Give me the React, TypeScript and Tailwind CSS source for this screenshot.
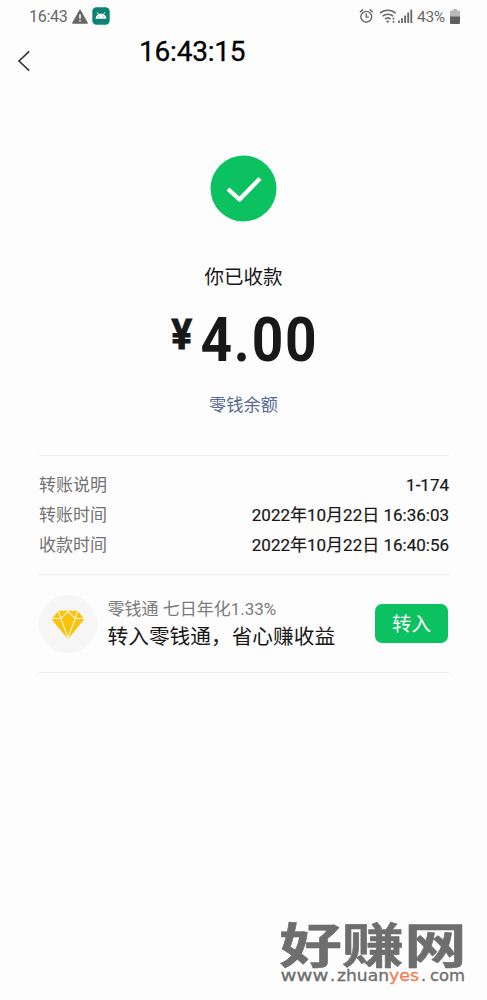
const details = [
  { label: "转账说明", value: "1-174" },
  { label: "转账时间", value: "2022年10月22日 16:36:03" },
  { label: "收款时间", value: "2022年10月22日 16:40:56" },
];

function StatusBar() {
  return (
    <div className="flex h-8 items-center justify-between pl-[29px] pr-[27px] text-[#686868]">
      <div className="flex items-center">
        <span className="w-[43px] pt-px text-[16px] leading-8 tracking-[-0.3px]">16:43</span>
        <svg width="16" height="15" viewBox="0 0 16 15">
          <path d="M8 0.8 15.5 14.2H.5Z" fill="#686868" stroke="#686868" strokeLinejoin="round" />
          <path d="M8 5.2v4.6M8 11v1.6" stroke="#fdfdfd" strokeWidth="1.5" />
        </svg>
        <svg className="ml-[4px]" width="18" height="18" viewBox="0 0 18 18">
          <rect x="0.3" y="0.3" width="17.4" height="17.4" rx="4.2" fill="#0c8471" />
          <path d="M3.6 11.8c0-3 2.4-5 5.4-5s5.4 2 5.4 5Z" fill="#fff" />
          <path d="m5.2 5.3 1.3 2.2M12.8 5.3l-1.3 2.2" stroke="#fff" strokeWidth="0.9" />
          <circle cx="6.8" cy="9.8" r="0.5" fill="#0c8471" />
          <circle cx="11.2" cy="9.8" r="0.5" fill="#0c8471" />
        </svg>
      </div>
      <div className="flex items-center">
        <svg width="15" height="16" viewBox="0 0 15 16" fill="none" stroke="#686868" strokeWidth="1.4">
          <circle cx="7.3" cy="8.8" r="5.4" />
          <path d="M7.3 5.6v3.5h2.6M.8 4.2 4 1.4M13.8 4.2 10.6 1.4" />
        </svg>
        <svg className="ml-[5px]" width="18" height="16" viewBox="0 0 18 16" fill="none" stroke="#686868" strokeWidth="1.5">
          <path d="M1 5.2c4.3-4.1 11.4-4.1 15.7 0M3.5 8.3c3-2.8 7.7-2.8 10.7 0M6 11.2c1.6-1.5 4-1.5 5.6 0" />
          <circle cx="8.7" cy="13.6" r="1.2" fill="#686868" stroke="none" />
          <path d="M14.5 9.5v2M14.5 12.800v2" />
        </svg>
        <svg className="ml-px" width="15" height="14" viewBox="0 0 15 14" stroke="#686868" strokeWidth="1.8">
          <path d="M1 11.5V14M4 9.2V14M7.1 6.5V14M10.2 3.5V14M13.3 .5V14" />
        </svg>
        <span className="ml-[4px] w-[30px] whitespace-nowrap pt-px text-[15.5px] leading-8 tracking-[-0.3px]">43%</span>
        <svg className="ml-[3px]" width="10" height="15" viewBox="0 0 10 15">
          <path d="M3 0h4v1.500h2a1 1 0 0 1 1 1V8H0V2.500a1 1 0 0 1 1-1h2Z" fill="#b9b9b9" />
          <path d="M0 7.500h10V14a1 1 0 0 1-1 1H1a1 1 0 0 1-1-1Z" fill="#606060" />
        </svg>
      </div>
    </div>
  );
}

function NavBar() {
  return (
    <div className="flex h-[60px] pl-[17px]">
      <svg className="mt-[18px]" width="14" height="22" viewBox="0 0 14 22" fill="none" stroke="#333" strokeWidth="1.6">
        <path d="M12.2 1.3 2 11l10.2 9.7" />
      </svg>
      <div className="ml-[108px] mt-[4px] text-[28px] leading-8 tracking-[-0.2px] text-black [-webkit-text-stroke:0.3px_black]">16:43:15</div>
    </div>
  );
}

function Diamond() {
  return (
    <div className="flex size-[58px] shrink-0 items-center justify-center rounded-full bg-[#f6f6f6]">
      <svg className="mt-[3px]" width="34" height="30" viewBox="0 0 34 30">
        <path d="M7.5 .8h19l6.800 8.400L17 29.200.7 9.200Z" fill="#fac20a" />
        <path d="M.7 8.500h9.100L17 1.500l7.200 7h9.100M9.800 8.500 17 28l7.200-19.500M7.300.8l2.500 7.700M26.700.8l-2.500 7.700" fill="none" stroke="#fff6dc" strokeWidth="1.1" />
      </svg>
    </div>
  );
}

function SiteMark() {
  return (
    <svg className="absolute left-[278px] top-[890px]" width="192" height="110" viewBox="0 0 192 110">
      <text
        transform="translate(1.5 73) scale(1 0.8)"
        textLength="187"
        lengthAdjust="spacingAndGlyphs"
        className="font-['Noto_Sans_CJK_SC',sans-serif] text-[60px] font-bold"
        fill="#6e6e6e"
        stroke="#6e6e6e"
        strokeWidth="0.7"
        strokeLinejoin="round"
      >
        好赚网
      </text>
      <g className="font-['DejaVu_Sans',sans-serif] text-[16px]" fill="#6e6e6e" stroke="#6e6e6e" strokeWidth="0.3">
        <text x="2.5" y="91" textLength="48" lengthAdjust="spacingAndGlyphs">www</text>
        <text x="52" y="91">.</text>
        <text x="59" y="91" textLength="52" lengthAdjust="spacingAndGlyphs">zhuan</text>
        <text x="111" y="91" textLength="30" lengthAdjust="spacingAndGlyphs" fill="#f47c50" stroke="#f47c50">yes</text>
        <text x="143" y="91">.</text>
        <text x="152" y="91" textLength="35" lengthAdjust="spacingAndGlyphs">com</text>
      </g>
    </svg>
  );
}

export default function App() {
  return (
    <div className="relative h-[1000px] w-[487px] overflow-hidden bg-[#fdfdfd] font-['Roboto','Noto_Sans_CJK_SC',sans-serif] text-[#181818]">
      <StatusBar />
      <NavBar />

      <main className="px-[39px] pt-[63px]">
        <section className="flex flex-col items-center">
          <svg width="67" height="67" viewBox="0 0 67 67">
            <circle cx="33.5" cy="33.5" r="33" fill="#0bc160" />
            <path d="m18 34 11.500 10.500 20.500-21" fill="none" stroke="#fff" strokeWidth="4.3" strokeLinejoin="round" />
          </svg>
          <div className="mt-[40px] text-[19.5px] leading-8">你已收款</div>
          <div className="ml-[3px] mt-[10px] flex h-[72px] origin-center scale-x-[0.91] items-start font-bold">
            <span className="mt-[6px] text-[43px] leading-[48px] [-webkit-text-stroke:0.8px_#181818]">¥</span>
            <span className="ml-[9px] pt-px text-[60.5px] leading-[72px] tracking-[2px]">4.00</span>
          </div>
          <div className="mt-[13px] text-[17.2px] leading-8 text-[#576b95]">零钱余额</div>
        </section>

        <section className="mt-[34px] flex h-[119px] w-[410px] flex-col border-t border-[#efefef] pt-[15px]">
          {details.map((d) => (
            <div key={d.label} className="flex h-[30px] items-center justify-between text-[17px]">
              <span className="text-[#737373]">{d.label}</span>
              <span className="whitespace-nowrap [-webkit-text-stroke:0.2px_#181818]">{d.value}</span>
            </div>
          ))}
        </section>

        <section className="flex h-[99px] w-[410px] items-center border-y border-[#ececec]">
          <Diamond />
          <div className="-mt-px ml-[10.5px] grow whitespace-nowrap">
            <div className="text-[17px] leading-[28px] text-[#7b7b7b]">零钱通 七日年化1.33%</div>
            <div className="text-[20.7px] leading-[28px]">转入零钱通，省心赚收益</div>
          </div>
          <button className="mr-px h-[39px] w-[73px] rounded-[7px] bg-[#0bc160] pt-[2px] text-[19.5px] text-white">转入</button>
        </section>
      </main>

      <SiteMark />
    </div>
  );
}
